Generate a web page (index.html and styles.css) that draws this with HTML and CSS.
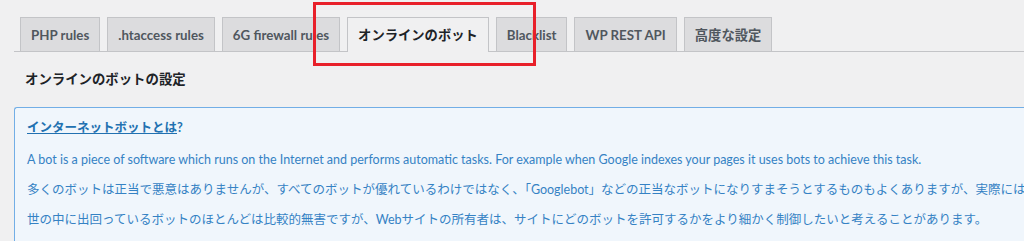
FILE: index.html
```html
<!DOCTYPE html>
<html lang="ja">
<head>
<meta charset="utf-8">
<link rel="stylesheet" href="styles.css">
</head>
<body>
<div class="wrap">
  <nav class="tabs">
    <a class="tab">PHP rules</a>
    <a class="tab">.htaccess rules</a>
    <a class="tab">6G firewall rules</a>
    <a class="tab active">オンラインのボット</a>
    <a class="tab">Blacklist</a>
    <a class="tab">WP REST API</a>
    <a class="tab">高度な設定</a>
  </nav>
  <h2 class="title">オンラインのボットの設定</h2>
  <div class="notice">
    <p class="q"><a class="qlink">インターネットボットとは</a>?</p>
    <p>A bot is a piece of software which runs on the Internet and performs automatic tasks. For example when Google indexes your pages it uses bots to achieve this task.</p>
    <p>多くのボットは正当で悪意はありませんが、すべてのボットが優れているわけではなく、「Googlebot」などの正当なボットになりすまそうとするものもよくありますが、実際には悪意のあるボットです。</p>
    <p>世の中に出回っているボットのほとんどは比較的無害ですが、Webサイトの所有者は、サイトにどのボットを許可するかをより細かく制御したいと考えることがあります。</p>
  </div>
</div>
<div class="highlight"></div>
</body>
</html>
```
FILE: styles.css
```css
html, body {
  margin: 0;
  padding: 0;
}
body {
  background: #f0f0f1;
  width: 1024px;
  height: 241px;
  overflow: hidden;
  position: relative;
  font-family: Lato, "Noto Sans CJK JP", sans-serif;
}
.wrap {
  padding-left: 14px;
  overflow: hidden;
}
.tabs {
  display: flex;
  gap: 7px;
  padding: 17px 0 0 6px;
  border-bottom: 1px solid #c3c4c7;
}
.tab {
  display: block;
  height: 34px;
  line-height: 34px;
  margin-bottom: -1px;
  padding: 0 10px;
  box-sizing: border-box;
  background: #dcdcde;
  border: 1px solid #c3c4c7;
  border-bottom: none;
  color: #50575e;
  font-size: 13.3px;
  font-weight: 700;
  white-space: nowrap;
}
.tab.active {
  background: #f0f0f1;
  color: #1d2327;
  height: 35px;
}
.title {
  margin: 0;
  padding: 17px 0 0 11px;
  height: 38px;
  font-size: 13.4px;
  font-weight: 700;
  color: #1d2327;
  line-height: 20px;
}
.notice {
  width: 1010px;
  height: 135px;
  background: #f0f6fc;
  border: 1px solid #72aee6;
  border-right: none;
  border-bottom: none;
  border-radius: 3px 0 0 0;
  padding: 10px 0 0 12px;
  box-sizing: border-box;
  overflow: hidden;
}
.notice p {
  margin: 0 0 10px;
  font-size: 12.5px;
  line-height: 20px;
  color: #3582c4;
  white-space: nowrap;
}
.notice p.q {
  font-weight: 700;
  color: #2271b1;
  margin-bottom: 12px;
}
.qlink {
  color: #2271b1;
  text-decoration: underline;
}
.highlight {
  position: absolute;
  left: 313px;
  top: 2px;
  width: 223px;
  height: 64px;
  box-sizing: border-box;
  border: 3px solid #e8202a;
}
```
